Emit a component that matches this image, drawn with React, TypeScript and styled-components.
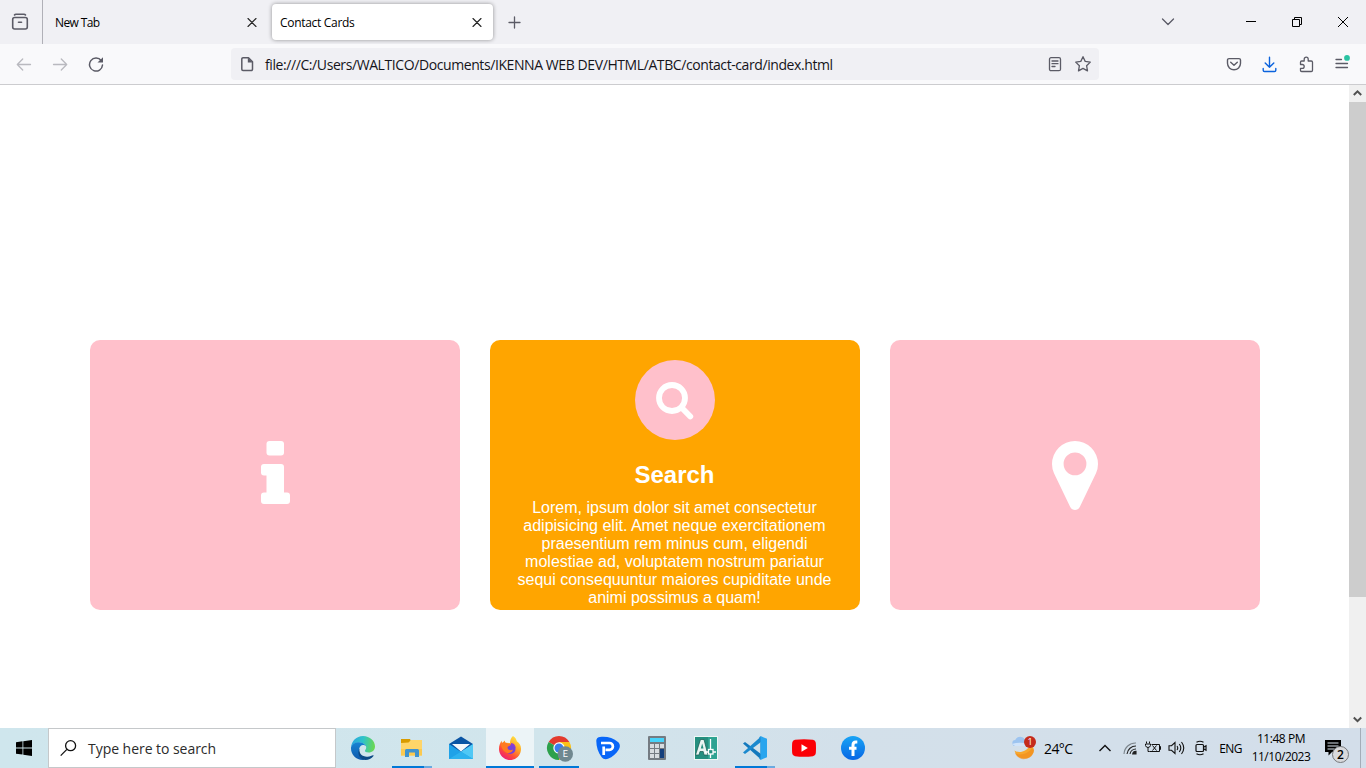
import React from 'react';
import styled, { createGlobalStyle } from 'styled-components';

const GlobalStyle = createGlobalStyle`
  * { box-sizing: border-box; }
  body { margin: 0; overflow: hidden; background: #fff; }
  svg { display: block; flex: none; }
`;

const ui = `'Segoe UI', 'Open Sans', 'Noto Sans', sans-serif`;

const Screen = styled.div`
  width: 1366px;
  height: 768px;
  display: flex;
  flex-direction: column;
  font-family: ${ui};
  color: #15141a;
`;

const Label = styled.span<{ $size: number; $track?: number; $color?: string }>`
  font-size: ${p => p.$size}px;
  letter-spacing: ${p => p.$track ?? 0}px;
  color: ${p => p.$color ?? '#000'};
  white-space: nowrap;
`;

/* Tab strip */
const TabStrip = styled.header`
  height: 44px;
  background: #f0f0f4;
  display: flex;
  align-items: center;
`;
const RecentButton = styled.div`
  width: 43px;
  height: 44px;
  padding-right: 2px;
  border-right: 1px solid #b0b0b7;
  display: flex;
  align-items: center;
  justify-content: center;
`;
const Tab = styled.div<{ $active?: boolean }>`
  width: 221px;
  height: 36px;
  margin-left: 4px;
  padding: 1px 11px 0 8px;
  border-radius: 4px;
  display: flex;
  align-items: center;
  justify-content: space-between;
  background: ${p => (p.$active ? '#fff' : 'transparent')};
  box-shadow: ${p => (p.$active ? '0 0 4px rgba(0,0,0,.4)' : 'none')};
`;
const NewTab = styled.div`
  padding-left: 15px;
  flex: 1;
`;
const ChevronSlot = styled.div`
  width: 67px;
`;
const WindowButton = styled.div`
  width: 46px;
  height: 44px;
  display: flex;
  align-items: center;
  justify-content: center;
`;

/* Navigation bar */
const NavBar = styled.div`
  height: 41px;
  background: #f9f9fb;
  border-bottom: 1px solid #cccccf;
  display: flex;
  align-items: center;
`;
const NavButton = styled.div<{ $w?: number }>`
  width: ${p => p.$w ?? 36}px;
  height: 40px;
  display: flex;
  align-items: center;
  justify-content: center;
`;
const NavGroup = styled.div<{ $w: number; $left?: number }>`
  width: ${p => p.$w}px;
  padding-left: ${p => p.$left ?? 0}px;
  display: flex;
`;
const UrlField = styled.div`
  width: 868px;
  height: 32px;
  border-radius: 4px;
  background: #f0f0f4;
  display: flex;
  align-items: center;
  padding: 0 2px 0 8px;
`;
const UrlText = styled.div`
  flex: 1;
  padding-left: 10px;
  padding-top: 1px;
  line-height: 20px;
`;

/* Page */
const Viewport = styled.div`
  height: 643px;
  display: flex;
`;
const Page = styled.main`
  width: 1349px;
  padding: 255px 89px 0 90px;
  display: flex;
  gap: 30px;
  background: #fff;
`;
const Card = styled.section<{ $open?: boolean }>`
  width: 370px;
  height: 270px;
  border-radius: 10px;
  background: ${p => (p.$open ? 'orange' : 'pink')};
  color: #fff;
  font-family: 'Liberation Sans', Arial, sans-serif;
  display: flex;
  flex-direction: column;
  align-items: center;
  justify-content: ${p => (p.$open ? 'flex-start' : 'center')};
  padding: ${p => (p.$open ? '20px 20px 0' : '0')};
`;
const Disc = styled.div`
  width: 80px;
  height: 80px;
  flex: none;
  border-radius: 50%;
  background: pink;
`;
const CardTitle = styled.h2`
  margin: 20px 0 10px;
  padding-right: 1px;
  font-size: 24px;
  line-height: 29px;
  font-weight: 700;
`;
const CardText = styled.p`
  margin: 0;
  padding-right: 1px;
  font-size: 16px;
  line-height: 18px;
  text-align: center;
`;
const ScrollBar = styled.aside`
  width: 17px;
  background: #f0f0f0;
  display: flex;
  flex-direction: column;
  justify-content: space-between;
`;
const ScrollThumb = styled.div`
  height: 495px;
  background: #cdcdcd;
  margin-bottom: auto;
`;

/* Taskbar */
const TaskBar = styled.footer`
  height: 40px;
  background: linear-gradient(90deg, #cfe6ed 0%, #d1e5ec 40%, #d3e0ea 62%, #d3deea 100%);
  display: flex;
`;
const Start = styled.div`
  width: 48px;
  display: flex;
  align-items: center;
  justify-content: center;
`;
const SearchBox = styled.div`
  width: 288px;
  height: 40px;
  background: #fff;
  border: 1px solid #c5c8ca;
  display: flex;
  align-items: center;
  gap: 11px;
  padding-left: 11px;
  margin-right: 3px;
`;
const Apps = styled.div`
  display: flex;
  gap: 1px;
  flex: 1;
`;
const AppButton = styled.div<{ $active?: boolean }>`
  width: 48px;
  height: 40px;
  display: flex;
  flex-direction: column;
  align-items: center;
  justify-content: space-between;
  padding-top: 8px;
  background: ${p => (p.$active ? '#ecf4f7' : 'transparent')};
`;
const Running = styled.div<{ $w: number; $more?: boolean }>`
  width: ${p => p.$w}px;
  height: 2px;
  background: #0078d7;
  border-right: ${p => (p.$more ? '8px solid #6aaae0' : 'none')};
`;
const Tray = styled.div`
  width: 354px;
  display: flex;
  align-items: center;
`;
const TraySlot = styled.div<{ $w: number; $top?: number }>`
  width: ${p => p.$w}px;
  padding-top: ${p => p.$top ?? 0}px;
  flex: none;
  display: flex;
  justify-content: center;
  align-items: center;
`;
const Weather = styled.div`
  width: 80px;
  flex: none;
  display: flex;
  align-items: center;
  gap: 8px;
`;
const Clock = styled.div`
  width: 66px;
  flex: none;
  display: flex;
  flex-direction: column;
  align-items: center;
  line-height: 18px;
`;
const ShowDesktop = styled.div`
  width: 5px;
  height: 40px;
  border-left: 1px solid #a3adb8;
`;

const line = { fill: 'none', stroke: '#5b5b66', strokeWidth: 1.3, strokeLinecap: 'round', strokeLinejoin: 'round' } as const;

const Cross = () => (
  <svg width="10" height="10" viewBox="0 0 10 10"><path d="M1 .5l8 8M9 .5l-8 8" {...line} stroke="#222" strokeWidth="1.1" /></svg>
);
const RecentIcon = () => (
  <svg width="18" height="18" viewBox="0 0 18 18"><g {...line} strokeWidth="1.6"><path d="M3.500 2Q4 1.200 5 1.200h8q1 0 1.500.8" /><rect x="1.700" y="4.500" width="14.600" height="11.500" rx="2" /><path d="M7.500 9.200h3" /></g></svg>
);
const Arrow = ({ flip }: { flip?: boolean }) => (
  <svg width="16" height="14" viewBox="0 0 16 14"><path d={flip ? 'M1.500 7.500h13M9.300 2l5.400 5.500L9.300 13' : 'M14.500 7.500h-13M6.700 2L1.300 7.500 6.700 13'} {...line} stroke="#b9b9bf" /></svg>
);
const Reload = () => (
  <svg width="16" height="16" viewBox="0 0 16 16"><path d="M13.300 4.800A6.500 6.500 0 1 0 14.500 9" {...line} strokeWidth="1.500" /><path d="M15 1.300v5.300H9.500z" fill="#5b5b66" /></svg>
);
const FileIcon = () => (
  <svg width="16" height="16" viewBox="0 0 16 16"><path d="M4 1.700h5.500l4 4v7.600a1.200 1.200 0 0 1-1.200 1.200H4a1.200 1.200 0 0 1-1.200-1.200V2.900A1.200 1.200 0 0 1 4 1.700z" {...line} strokeWidth="1.500" /><path d="M8.800 1.500v5h5z" fill="#5b5b66" /></svg>
);
const Reader = () => (
  <svg width="14" height="16" viewBox="0 0 14 16"><g {...line}><rect x="1.500" y="1.700" width="11" height="13" rx="1.500" /><path d="M4 5h6M4 7.700h6M4 10.500h3" /></g></svg>
);
const Star = () => (
  <svg width="18" height="18" viewBox="0 0 18 18"><path d="M9 1.700l2.200 4.700 5.100.7-3.700 3.600.9 5.200L9 13.400l-4.500 2.500.9-5.200L1.700 7.100l5.100-.7z" {...line} /></svg>
);
const Pocket = () => (
  <svg width="16" height="16" viewBox="0 0 16 16"><path d="M3 2.600h10a1.500 1.500 0 0 1 1.500 1.500v3.200a6.500 6.500 0 0 1-13 0V4.100A1.500 1.500 0 0 1 3 2.600zM4.700 6.200L8 9.300l3.300-3.100" {...line} strokeWidth="1.400" /></svg>
);
const Download = () => (
  <svg width="16" height="17" viewBox="0 0 16 17"><path d="M7.500 1.200v10M3.200 7l4.300 4.200L11.800 7M1.200 12.500v1.700a1.300 1.300 0 0 0 1.300 1.300h10a1.300 1.300 0 0 0 1.300-1.300v-1.700" {...line} stroke="#0b63dd" strokeWidth="1.400" /></svg>
);
const Puzzle = () => (
  <svg width="16" height="17" viewBox="0 0 16 17"><path d="M2.500 8.500V6.200q0-1.200 1.200-1.200h2.500V3.200a2 2 0 0 1 4 0V5h3.100q1.200 0 1.200 1.200v8.100q0 1.200-1.200 1.200H3.700q-1.200 0-1.200-1.200v-2h1.800a1.900 1.900 0 0 0 0-3.800z" {...line} /></svg>
);
const Menu = () => (
  <svg width="18" height="18" viewBox="0 0 18 18"><path d="M3 4.500h5.500M3 8.500h11.500M3 12.500h11.500" {...line} /><circle cx="14" cy="2.900" r="2.900" fill="#2ac3a2" /></svg>
);
const ScrollArrow = ({ down }: { down?: boolean }) => (
  <svg width="17" height="17" viewBox="0 0 17 17"><path d={down ? 'M4.800 6.500l3.700 3.700 3.700-3.700' : 'M4.800 10l3.700-3.700 3.700 3.700'} fill="none" stroke="#505050" strokeWidth="2" /></svg>
);

const InfoGlyph = () => (
  <svg width="80" height="80" viewBox="0 0 80 80" fill="#fff"><rect x="31.500" y="6" width="17.500" height="14.500" rx="3" /><path d="M29 29h17a3 3 0 0 1 3 3v25.500h3a3 3 0 0 1 3 3V66a3 3 0 0 1-3 3H29a3 3 0 0 1-3-3v-5.500a3 3 0 0 1 3-3h2.500v-17H29a3 3 0 0 1-3-3V32a3 3 0 0 1 3-3z" /></svg>
);
const PinGlyph = () => (
  <svg width="80" height="80" viewBox="0 0 80 80"><path fillRule="evenodd" fill="#fff" d="M40 6A23 23 0 0 0 17 29q0 5 2 9.200l16.100 33.600Q36.800 75 40 75t4.900-3.200L61 38.200Q63 34 63 29A23 23 0 0 0 40 6zM40 17.500a11.400 11.400 0 1 1 0 22.800 11.400 11.400 0 0 1 0-22.800z" /></svg>
);
const SearchGlyph = () => (
  <svg width="80" height="80" viewBox="0 0 80 80" fill="none" stroke="#fff" strokeWidth="5.800"><circle cx="37" cy="38" r="13" /><path d="M46.500 47.500l8.800 9" strokeLinecap="round" /></svg>
);

const WindowsLogo = () => (
  <svg width="16" height="16" viewBox="0 0 16 16"><path d="M0 2.200L6.500 1.300v6.200H0zM7.300 1.200L16 0v7.500H7.300zM0 8.400h6.500v6.200L0 13.700zM7.300 8.400H16V16l-8.700-1.200z" /></svg>
);
const Magnifier = () => (
  <svg width="17" height="17" viewBox="0 0 17 17" fill="none" stroke="#111" strokeWidth="1.300"><circle cx="10.600" cy="5.700" r="5" /><path d="M6.900 9.400L.7 15.600" /></svg>
);

const EdgeIcon = () => (
  <svg width="24" height="24" viewBox="0 0 24 24">
    <defs>
      <linearGradient id="eg" x1="0" y1=".3" x2="1" y2=".4"><stop stopColor="#2aa5e0" /><stop offset=".5" stopColor="#2fc3c8" /><stop offset="1" stopColor="#6bd84f" /></linearGradient>
      <linearGradient id="eb" x1="0" y1="0" x2="0" y2="1"><stop stopColor="#1684d4" /><stop offset="1" stopColor="#1059ab" /></linearGradient>
    </defs>
    <path d="M0 11.500C.5 5 5.500 0 12 0c7 0 12 5.200 12 10.500 0 3.800-3 6-6.300 6-2.700 0-4-1-3.700-2 .3-.8 1.200-1.200 1.200-3C15.200 9 12.500 6.500 8.500 6.500 4.500 6.500 1 8.500 0 11.500z" fill="url(#eg)" />
    <path d="M0 11.500c1-3.500 4.500-5.200 8-5.200 3.500 0 6.300 1.700 7 4-1-1-2.200-1.300-3.200-1.200-2.700.3-4 3-3.700 6C8.500 19.500 11 23 15 23.600 6.500 25.500 0 19.500 0 12.500z" fill="url(#eb)" />
    <path d="M8.500 12.500c-1 5 3 8.500 8 8.200 2.500-.1 4.500-1.200 5.500-1.500.6-.2.800.3.500.7-2 2.600-5 4-8 4C9 23.500 5.500 17.500 8.500 12.500z" fill="#0c4a86" />
  </svg>
);
const FolderIcon = () => (
  <svg width="24" height="24" viewBox="0 0 24 24"><path d="M1 3h9l1 2v2H1z" fill="#d99b00" /><path d="M1 7l7.500-.5L11 4h11v15.500H1z" fill="#ffd569" /><path d="M1 13h21v6.500H1z" fill="#fbc94f" /><path d="M5 21v-6.500A1.500 1.500 0 0 1 6.500 13h11a1.500 1.500 0 0 1 1.500 1.500V21h-4v-4.500H9V21z" fill="#3f93cf" /></svg>
);
const MailIcon = () => (
  <svg width="24" height="24" viewBox="0 0 24 24"><path d="M0 8l12-7.500L24 8v3L12 16 0 11z" fill="#0b55a4" /><path d="M3 8h18l-9 7.500z" fill="#f5f8fb" /><path d="M0 8l12 8 12-8v15H0z" fill="#1fa2e8" /><path d="M24 8v15L12 15.700z" fill="#50c8f5" /><path d="M0 23l12-7.300L24 23z" fill="#2eb2ee" /></svg>
);
const FirefoxIcon = () => (
  <svg width="24" height="24" viewBox="0 0 24 24">
    <defs><linearGradient id="ff" x1=".85" y1="0" x2=".2" y2="1"><stop stopColor="#fff04b" /><stop offset=".4" stopColor="#ffa224" /><stop offset=".7" stopColor="#ff4a39" /><stop offset="1" stopColor="#e71583" /></linearGradient></defs>
    <path d="M15 0c2.500 1.700 3.500 3.500 3.800 5.200 3 2 4.400 5 4.200 8A11 11 0 0 1 1 13c0-3.500 1-6 2.700-8.300L4 7l3-2.500v2.200L12 7c0-3 1.200-5.500 3-7z" fill="url(#ff)" />
    <circle cx="12.500" cy="13" r="5" fill="#7742d8" />
    <path d="M3 8c3-2.500 6-1 6.500-.2l3.500.4c-.5 2-3 1.700-3.500 3.300 0 2.500 3 3.500 5.500 2-.5 3-4 4.500-7 3S3 11 3 8z" fill="#ff7a22" />
    <path d="M13 7c3 0 5 3 4.600 5.500C16.500 10 15 9.500 13 9z" fill="#8f3bd4" />
  </svg>
);
const ChromeIcon = () => (
  <svg width="24" height="26" viewBox="0 0 24 26" overflow="visible">
    <path d="M12 12L1.600 6A12 12 0 0 1 22.400 6z" fill="#e33b2e" /><path d="M12 12L1.600 6A12 12 0 0 0 12 24l3-5z" fill="#2da04b" /><path d="M12 12V6h10.400A12 12 0 0 1 12 24z" fill="#fbc116" />
    <circle cx="12" cy="12" r="5.700" fill="#fff" /><circle cx="12" cy="12" r="4.500" fill="#3b7ded" />
    <circle cx="18.300" cy="18" r="7.700" fill="#708890" /><text x="18.300" y="21.300" textAnchor="middle" fontSize="9" fontFamily="Roboto, sans-serif" fill="#fff">E</text>
  </svg>
);
const PIcon = () => (
  <svg width="24" height="24" viewBox="0 0 24 24"><path d="M4 1c7-.7 13 .8 18.300 5.200 2 2 2 5 .5 7.300-2.500 4-6.300 7.500-10.800 9.300-2.500.9-5 .2-6.300-1.500C2 16.500.2 10 .3 4.500.3 2.500 2 1.200 4 1z" fill="#0866f8" /><path d="M5 7h8.500a3.400 3.400 0 0 1 0 6.800H9.500M7.700 19v-8.500" fill="none" stroke="#fff" strokeWidth="2.700" /></svg>
);
const CalcIcon = () => (
  <svg width="18" height="24" viewBox="0 0 18 24"><rect width="18" height="24" rx="1" fill="#747b82" /><rect x="2" y="2" width="14" height="4" fill="#47d4fb" />
    {[8, 13, 18].map(y => [2, 7, 12].map(x => <rect key={`${x}-${y}`} x={x} y={y} width="4" height="4" fill="#d7dce0" />))}
    <rect x="12" y="13" width="4" height="9" fill="#143f7c" /></svg>
);
const CadIcon = () => (
  <svg width="24" height="24" viewBox="0 0 24 24"><rect x=".5" y=".5" width="23" height="23" fill="#258f7f" stroke="#edf7f5" /><path d="M14 1h9v22h-9z" fill="#2fa392" /><path d="M1.500 19L6.500 3.500H10L14 19h-4l-.8-3.500H6L5 19z" fill="#e9f5f2" stroke="#14574d" strokeWidth=".7" /><path d="M6.800 12.500l1.400-5L9.500 12.500z" fill="#258f7f" /><path d="M16.500 3v11M16.500 18v4M19 16h3M11 16h3.500" stroke="#fff" strokeWidth="1.300" /><rect x="14.500" y="13.500" width="4.500" height="4.500" fill="#258f7f" stroke="#fff" strokeWidth="1.300" /></svg>
);
const CodeIcon = () => (
  <svg width="24" height="24" viewBox="0 0 24 24"><path d="M0 7.500L2 6l16 12v5.500z" fill="#1479bd" /><path d="M0 16.500L2 18l16-12V.5z" fill="#1b89ce" /><path d="M17.500 0L24 2.800v18.400L17.500 24z" fill="#29a5ee" /><path d="M17.500 0L16.200 1.500l1.800 5v11l-1.800 5 1.300 1.500z" fill="#1f91d8" /></svg>
);
const TubeIcon = () => (
  <svg width="24" height="24" viewBox="0 0 24 24"><path d="M3 3.700q9-1 18 0 2.500.3 2.800 3 .4 5.300 0 10.600-.3 2.700-2.800 3-9 1-18 0-2.500-.3-2.800-3-.4-5.300 0-10.600.3-2.700 2.800-3z" fill="#fb0006" /><path d="M9.500 8.300l6.300 3.700-6.300 3.700z" fill="#fff" /></svg>
);
const FacebookIcon = () => (
  <svg width="24" height="24" viewBox="0 0 24 24"><defs><linearGradient id="fb" x1="0" y1="0" x2="0" y2="1"><stop stopColor="#18a4f5" /><stop offset="1" stopColor="#0866e4" /></linearGradient></defs><circle cx="12" cy="12" r="12" fill="url(#fb)" /><path d="M16.300 6h-1.500Q12 6 12 9v11M8 12.300h7.500" fill="none" stroke="#fff" strokeWidth="3" /></svg>
);

const WeatherIcon = () => (
  <svg width="24" height="24" viewBox="0 0 24 24"><path d="M2.500 14.500c4 3 12 2 16-6 3 2 4 5 3 8a10 10 0 0 1-19-2z" fill="#f8a72d" /><path d="M3 17c5 3 13 1 17-5l2 2a10 10 0 0 1-18 5z" fill="#ee8619" opacity=".55" /><path d="M3.500 10a3 3 0 0 1-.3-6A5.500 5.500 0 0 1 13 3.500c4 0 5 4 1 6.500z" fill="#9dc4f0" /><path d="M0 8q4-2 13-1v3H3z" fill="#d1e4fa" /><circle cx="18" cy="6" r="6" fill="#c42b1c" /><text x="18" y="9.200" textAnchor="middle" fontSize="9" fontFamily="Open Sans, sans-serif" fill="#fff">1</text></svg>
);
const TrayChevron = () => (
  <svg width="14" height="10" viewBox="0 0 14 10"><path d="M1.500 8L7 2.500 12.500 8" fill="none" stroke="#111" strokeWidth="1.400" /></svg>
);
const Wifi = () => (
  <svg width="14" height="14" viewBox="0 0 14 14" fill="none" stroke="#222" strokeWidth="1.100"><path d="M1 13A11.500 11.500 0 0 1 13 2" stroke="#7c858c" /><path d="M4 13A9 9 0 0 1 13 5M7 13a6 6 0 0 1 6-5" /><path d="M9.700 13a3.300 3.300 0 0 1 3.300-2.800V13z" fill="#222" /></svg>
);
const Battery = () => (
  <svg width="16" height="14" viewBox="0 0 16 14" fill="none" stroke="#111" strokeWidth="1"><path d="M6.500 3.500h8v7h-10M14.500 5.500h1v3h-1M1.500 .5v2M4.500 .5v2M.5 3h5v1.500Q5 6.500 3 6.500T.5 4.500zM3 6.500v4h1.500M7.500 4.500l4 5M11.500 4.500l-4 5" /></svg>
);
const Volume = () => (
  <svg width="17" height="14" viewBox="0 0 17 14" fill="none" stroke="#111" strokeWidth="1.100"><path d="M1 4.700h2.500L7 1.500v11L3.500 9.300H1zM9 5q1.500 2 0 4M11.300 3q3 4 0 8M13.500 1q4.500 6 0 12" /></svg>
);
const MeetNow = () => (
  <svg width="14" height="16" viewBox="0 0 14 16" fill="none" stroke="#111" strokeWidth="1.200"><rect x="2" y="4.500" width="7.500" height="7" rx="1" /><path d="M9.500 7.200l2.500-1.500v4.600L9.500 8.800M2.500 2.300Q6 .2 9.500 2.300M2.500 13.700Q6 15.800 9.500 13.700" /></svg>
);
const Notice = () => (
  <svg width="26" height="26" viewBox="0 0 26 26"><path d="M1 2h16v12H8l-3.500 3.500V14H1z" /><path d="M3.500 5h11M3.500 8h11M3.500 11h7" stroke="#d8e2ec" /><circle cx="16.500" cy="16.500" r="8" fill="#d8d9dc" stroke="#77797c" /><text x="16.500" y="20.700" textAnchor="middle" fontSize="12" fontWeight="600" fontFamily="Open Sans, sans-serif">2</text></svg>
);

const apps = [
  { name: 'edge', icon: <EdgeIcon /> },
  { name: 'files', icon: <FolderIcon />, run: 40, more: true },
  { name: 'mail', icon: <MailIcon /> },
  { name: 'firefox', icon: <FirefoxIcon />, run: 48, active: true },
  { name: 'chrome', icon: <ChromeIcon />, run: 40 },
  { name: 'p', icon: <PIcon /> },
  { name: 'calculator', icon: <CalcIcon /> },
  { name: 'cad', icon: <CadIcon /> },
  { name: 'code', icon: <CodeIcon />, run: 40, more: true },
  { name: 'youtube', icon: <TubeIcon /> },
  { name: 'facebook', icon: <FacebookIcon /> },
];

export default function App() {
  return (
    <Screen>
      <GlobalStyle />
      <TabStrip>
        <RecentButton><RecentIcon /></RecentButton>
        <Tab><Label $size={12} $track={-0.6}>New Tab</Label><Cross /></Tab>
        <Tab $active><Label $size={12} $track={-0.3}>Contact Cards</Label><Cross /></Tab>
        <NewTab><svg width="14" height="14" viewBox="0 0 14 14"><path d="M6.500 2v11M1 7.500h11" {...line} /></svg></NewTab>
        <ChevronSlot><svg width="14" height="10" viewBox="0 0 14 10"><path d="M1.500 2L7 7.500 12.500 2" {...line} /></svg></ChevronSlot>
        <WindowButton><svg width="12" height="12" viewBox="0 0 12 12"><path d="M1 5.500h10" stroke="#000" /></svg></WindowButton>
        <WindowButton><svg width="12" height="12" viewBox="0 0 12 12"><path d="M1.500 3.500h7v7h-7zM3.500 3V1.500h7v7H9" fill="none" stroke="#000" /></svg></WindowButton>
        <WindowButton><svg width="12" height="12" viewBox="0 0 12 12"><path d="M1 1l10 10M11 1L1 11" stroke="#000" /></svg></WindowButton>
      </TabStrip>
      <NavBar>
        <NavGroup $w={231} $left={6}>
          <NavButton><Arrow /></NavButton>
          <NavButton><Arrow flip /></NavButton>
          <NavButton><Reload /></NavButton>
        </NavGroup>
        <UrlField>
          <FileIcon />
          <UrlText><Label $size={14} $track={-0.41} $color="#15141a">file:///C:/Users/WALTICO/Documents/IKENNA WEB DEV/HTML/ATBC/contact-card/index.html</Label></UrlText>
          <NavButton $w={28}><Reader /></NavButton>
          <NavButton $w={28}><Star /></NavButton>
        </UrlField>
        <NavGroup $w={267} $left={117}>
          <NavButton><Pocket /></NavButton>
          <NavButton><Download /></NavButton>
          <NavButton><Puzzle /></NavButton>
          <NavButton><Menu /></NavButton>
        </NavGroup>
      </NavBar>
      <Viewport>
        <Page>
          <Card><InfoGlyph /></Card>
          <Card $open>
            <Disc><SearchGlyph /></Disc>
            <CardTitle>Search</CardTitle>
            <CardText>Lorem, ipsum dolor sit amet consectetur adipisicing elit. Amet neque exercitationem praesentium rem minus cum, eligendi molestiae ad, voluptatem nostrum pariatur sequi consequuntur maiores cupiditate unde animi possimus a quam!</CardText>
          </Card>
          <Card><PinGlyph /></Card>
        </Page>
        <ScrollBar><ScrollArrow /><ScrollThumb /><ScrollArrow down /></ScrollBar>
      </Viewport>
      <TaskBar>
        <Start><WindowsLogo /></Start>
        <SearchBox><Magnifier /><Label $size={14} $track={-0.04} $color="#2b2b2b">Type here to search</Label></SearchBox>
        <Apps>
          {apps.map(a => (
            <AppButton key={a.name} $active={a.active}>
              {a.icon}
              {a.run && <Running $w={a.run} $more={a.more} />}
            </AppButton>
          ))}
        </Apps>
        <Tray>
          <Weather><WeatherIcon /><Label $size={14} $track={-0.6}>24°C</Label></Weather>
          <TraySlot $w={25}><TrayChevron /></TraySlot>
          <TraySlot $w={25}><Wifi /></TraySlot>
          <TraySlot $w={22}><Battery /></TraySlot>
          <TraySlot $w={25}><Volume /></TraySlot>
          <TraySlot $w={24}><MeetNow /></TraySlot>
          <TraySlot $w={35}><Label $size={12} $track={-0.6}>ENG</Label></TraySlot>
          <Clock><Label $size={12} $track={-0.45}>11:48 PM</Label><Label $size={12} $track={-0.5}>11/10/2023</Label></Clock>
          <TraySlot $w={46} $top={5}><Notice /></TraySlot>
          <ShowDesktop />
        </Tray>
      </TaskBar>
    </Screen>
  );
}
